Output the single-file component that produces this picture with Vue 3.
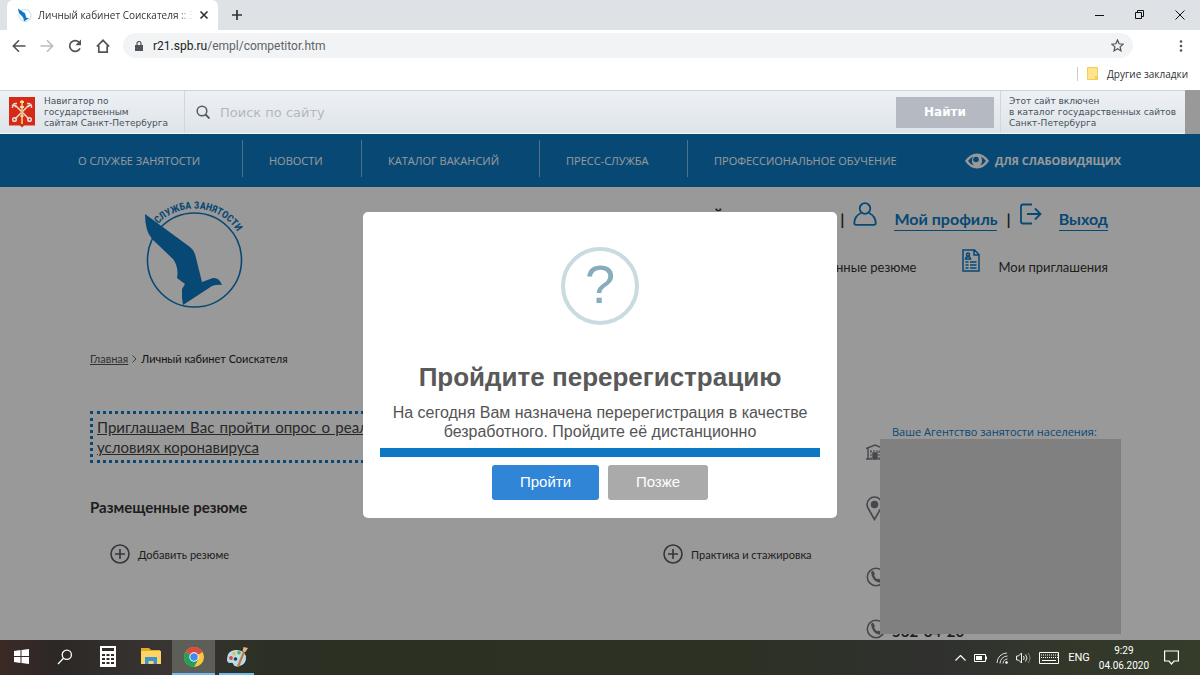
<script setup>
const menu = ['О службе занятости', 'Новости', 'Каталог вакансий', 'Пресс-служба', 'Профессиональное обучение']
const keys = [0, 1, 2, 3, 4, 5, 6, 7, 8]
</script>

<template>
  <div class="screen">
    <header class="tabs">
      <div class="tab">
        <svg class="fav" viewBox="0 0 16 16"><circle cx="8.500" cy="8" r="6.500" fill="#fff" stroke="#b9dcf2" /><path d="M1 0.500 L8.500 5.500 L10 10.500 L13 11 L7.500 14 L6.500 10 L2 5Z" fill="#0d79c2" /></svg>
        <span class="tab-name">Личный кабинет Соискателя :: З</span>
        <button class="plain" aria-label="Закрыть вкладку"><svg width="10" height="10" viewBox="0 0 10 10"><path d="M1.500 1.500l7 7M8.500 1.500l-7 7" stroke="#333" stroke-width="1.600" /></svg></button>
      </div>
      <button class="plain plus" aria-label="Новая вкладка"><svg width="12" height="12" viewBox="0 0 12 12"><path d="M6 1v10M1 6h10" stroke="#333" stroke-width="1.700" /></svg></button>
      <div class="win">
        <button class="plain" aria-label="Свернуть"><svg width="10" height="10" viewBox="0 0 10 10"><path d="M0 5.500h9" stroke="#111" /></svg></button>
        <button class="plain" aria-label="Окно"><svg width="10" height="10" viewBox="0 0 10 10" fill="none" stroke="#111"><path d="M.5 2.500h6v6h-6zM2.500 2.500v-2h6v6h-2" /></svg></button>
        <button class="plain" aria-label="Закрыть"><svg width="10" height="10" viewBox="0 0 10 10"><path d="M.5 .5l9 9M9.500 .5l-9 9" stroke="#111" /></svg></button>
      </div>
    </header>

    <div class="toolbar">
      <button class="plain" aria-label="Назад"><svg width="14" height="14" viewBox="0 0 14 14" fill="none" stroke="#505357" stroke-width="1.600"><path d="M13.500 7H1.500M7 1.300L1.300 7 7 12.700" /></svg></button>
      <button class="plain" aria-label="Вперёд"><svg width="14" height="14" viewBox="0 0 14 14" fill="none" stroke="#babcbe" stroke-width="1.600"><path d="M.5 7h12M7 1.300L12.700 7 7 12.700" /></svg></button>
      <button class="plain" aria-label="Обновить"><svg width="14" height="14" viewBox="0 0 14 14"><path d="M12 9.300A5.400 5.400 0 1 1 11 3.200" fill="none" stroke="#505357" stroke-width="1.700" /><path d="M13 .6v5.600H7.400z" fill="#505357" /></svg></button>
      <button class="plain" aria-label="Домой"><svg width="14" height="14" viewBox="0 0 14 14" fill="none" stroke="#505357" stroke-width="1.700"><path d="M.8 7.500L7 1.300l6.200 6.200M2.800 6.500v6.600h8.400V6.500" /></svg></button>
      <div class="omni">
        <svg width="8" height="10" viewBox="0 0 8 10"><path d="M0 4h8v6H0z" fill="#505357" /><path d="M2 4V2.500a2 2 0 0 1 4 0V4" fill="none" stroke="#505357" stroke-width="1.200" /></svg>
        <span><b>r21.spb.ru</b>/empl/competitor.htm</span>
        <svg class="star" width="13" height="13" viewBox="0 0 13 13"><path d="M6.500 1l1.600 3.800 4.100.4-3.100 2.700.9 4-3.500-2.100L3 11.900l.9-4L.8 5.200l4.100-.4z" fill="none" stroke="#505357" stroke-width="1.200" /></svg>
      </div>
      <button class="plain dots" aria-label="Меню"><svg width="4" height="14" viewBox="0 0 4 14" fill="#505357"><circle cx="2" cy="2.500" r="1.300" /><circle cx="2" cy="7" r="1.300" /><circle cx="2" cy="11.500" r="1.300" /></svg></button>
    </div>
    <div class="marks">
      <svg width="11" height="13" viewBox="0 0 11 13"><path d="M.5 .5h10v12H.5z" fill="#ffe48d" stroke="#f2cd57" /><path d="M8 9h2.500v3.500H8z" fill="#f2cd57" /></svg>
      <span>Другие закладки</span>
    </div>

    <div class="page">
      <div class="gov">
        <a class="gov-left" href="#">
          <svg width="26" height="31" viewBox="0 0 26 31"><path d="M0 0h26v28.500H15L13 30.500l-2-2H0z" fill="#d62a18" /><g fill="none" stroke="#e6dcd4" stroke-width="1.500"><path d="M6 22L20 8M20 22L6 8" /><path d="M3.500 11Q3 6 8 6.500M22.500 11Q23 6 18 6.500M4 7l3 3M22 7l-3 3" /><circle cx="5.500" cy="22.500" r="1.800" /><circle cx="20.500" cy="22.500" r="1.800" /></g><path d="M13 3v24" stroke="#e9c46c" stroke-width="1.800" /><path d="M11 5h4M11 10h4M11.500 19h3" stroke="#f2dc9a" stroke-width="2" /></svg>
          <span>Навигатор по<br>государственным<br>сайтам Санкт-Петербурга</span>
        </a>
        <form class="search" @submit.prevent>
          <label for="q"><svg width="14" height="14" viewBox="0 0 14 14" fill="none" stroke="#565b62"><circle cx="6" cy="6" r="4.800" stroke-width="1.500" /><path d="M9.500 9.500l4 4" stroke-width="1.900" /></svg></label>
          <input id="q" type="text" placeholder="Поиск по сайту" aria-label="Поиск по сайту">
          <button>Найти</button>
        </form>
        <a class="gov-right" href="#">Этот сайт включен<br>в каталог государственных сайтов<br>Санкт-Петербурга</a>
      </div>

      <nav class="nav">
        <a v-for="m in menu" :key="m" href="#">{{ m }}</a>
        <a class="eye" href="#"><svg width="24" height="16" viewBox="0 0 24 16"><path d="M0 8Q5 .5 12 .5T24 8Q19 15.500 12 15.500T0 8z" fill="#fff" /><path d="M3 8Q5 5 8 3.500Q5.500 9 9 12.500Q5 11 3 8zM21 8Q19 5 16 3.500Q18.500 9 15 12.500Q19 11 21 8z" fill="#0d79c2" /><circle cx="11" cy="6.500" r="2.800" fill="#0d79c2" /></svg>Для слабовидящих</a>
      </nav>

      <main>
        <div class="head">
          <svg class="logo" viewBox="0 0 102 112" width="102" height="112">
            <defs><path id="arc" d="M15 26A51 51 0 0 1 102 54" /></defs>
            <circle cx="51.500" cy="62" r="47" fill="none" stroke="#0d79c2" stroke-width="1.600" />
            <path d="M2 16L47 49Q51 52 52 56L59 84 70 80Q76 79 79 87 71 86 66 90L40 107 39 100V91L42 86 34 80Q36 69 30 61L9 41Q2 33 2 16z" fill="#0d79c2" />
            <text><textPath href="#arc">СЛУЖБА ЗАНЯТОСТИ</textPath></text>
          </svg>
          <div class="account">
            <div class="who">
              <span class="name">Й</span><span>|</span>
              <svg width="24" height="24" viewBox="0 0 24 24" fill="none" stroke="#0d79c2" stroke-width="1.800"><circle cx="12" cy="6.500" r="5.300" /><path d="M8 11Q1.500 14 1.300 21q0 1.800 1.700 1.800h18q1.700 0 1.700-1.800Q22.500 14 16 11" /></svg>
              <a href="#">Мой профиль</a><span class="bar">|</span>
              <svg width="22" height="24" viewBox="0 0 22 24" fill="none" stroke="#0d79c2" stroke-width="1.800"><path d="M12 2.500H3Q1 2.500 1 4.500v15q0 2 2 2h9M7 12h13M15 6.500l5.500 5.500-5.500 5.500" /></svg>
              <a href="#">Выход</a>
            </div>
            <div class="links">
              <a href="#">Избранные резюме</a>
              <svg width="18" height="24" viewBox="0 0 18 24" fill="none" stroke="#0d79c2" stroke-width="1.500"><path d="M1 1h11.500L17 5.500V22H1zM12 1v5h5" /><circle cx="6" cy="5.500" r="1.500" /><path d="M3.500 10Q4 7.500 6 7.500T8.500 10zM3.500 13h3M8 13h6.500M3.500 16h3M8 16h6.500M3.500 19h3M8 19h6.500" /></svg>
              <a href="#">Мои приглашения</a>
            </div>
          </div>
        </div>

        <div class="crumbs"><a href="#">Главная</a><svg width="5" height="8" viewBox="0 0 5 8"><path d="M.5 .5L4 4 .5 7.500" fill="none" stroke="#666" /></svg><span>Личный кабинет Соискателя</span></div>

        <div class="cols">
          <section>
            <a class="survey" href="#">Приглашаем Вас пройти опрос о реализации прав граждан на труд и полную занятость населения в условиях коронавируса</a>
            <h2>Размещенные резюме</h2>
            <div class="actions">
              <a v-for="t in ['Добавить резюме', 'Практика и стажировка']" :key="t" href="#">
                <svg width="20" height="20" viewBox="0 0 20 20" fill="none" stroke="#555a60" stroke-width="1.600"><circle cx="10" cy="10" r="9" /><path d="M10 5v10M5 10h10" /></svg>{{ t }}
              </a>
            </div>
          </section>
          <aside>
            <h3>Ваше Агентство занятости населения:</h3>
            <svg class="house" width="18" height="16" viewBox="0 0 18 16" fill="none" stroke="#74777c" stroke-width="1.400"><path d="M0 4.500L9 1l9 3.500M2 4v11M16 4v11M0 15h6M12 15h6" /><path d="M4 7h10M5 7v7M13 7v7" stroke-width="1" stroke-dasharray="2 1" /><path d="M7 9h4v6H7z" fill="#74777c" /></svg>
            <svg class="pin" width="17" height="25" viewBox="0 0 17 25" fill="none" stroke="#74777c" stroke-width="1.600"><path d="M8.500 23.500L2.500 13Q1 10.500 1 8.500a7.500 7.500 0 0 1 15 0q0 2-1.500 4.500z" /><circle cx="8.500" cy="8.500" r="3" fill="#74777c" /></svg>
            <div v-for="n in 2" :key="n" class="phone">
              <svg width="20" height="20" viewBox="0 0 20 20"><circle cx="10" cy="10" r="8.700" fill="none" stroke="#74777c" stroke-width="1.500" /><path d="M5 5l2-1.500 2 3.500-1 1.200q1 2.800 3.500 4l1.300-.8 3 2-1.500 2.300Q6 15 5 5z" fill="#74777c" /></svg>
              <b v-if="n === 2">562-64-20</b>
            </div>
          </aside>
        </div>
      </main>

      <div class="shade">
        <div class="modal" role="dialog" aria-labelledby="mt">
          <div class="q">?</div>
          <h1 id="mt">Пройдите перерегистрацию</h1>
          <p>На сегодня Вам назначена перерегистрация в качестве безработного. Пройдите её дистанционно</p>
          <div class="line"></div>
          <div class="btns"><button>Пройти</button><button class="later">Позже</button></div>
        </div>
      </div>
      <div class="cover"></div>
    </div>

    <footer class="task">
      <button class="plain" aria-label="Пуск"><svg width="15" height="15" viewBox="0 0 15 15" fill="#fff"><path d="M0 2l6.500-1v6H0zM7.500 1L15 0v7H7.500zM0 8h6.500v6L0 13zM7.500 8H15v7l-7.500-1z" /></svg></button>
      <button class="plain" aria-label="Поиск"><svg width="16" height="16" viewBox="0 0 16 16" fill="none" stroke="#fff" stroke-width="1.300"><circle cx="9.800" cy="5.800" r="4.600" /><path d="M6.500 9.200L1 15" /></svg></button>
      <button class="plain" aria-label="Калькулятор"><svg width="16" height="21" viewBox="0 0 16 21"><path d="M0 0h16v21H0z" fill="#fff" /><path d="M2 2h12v3H2zM2 8h3v2H2zM6.500 8h3v2h-3zM11 8h3v2h-3zM2 12h3v2H2zM6.500 12h3v2h-3zM11 12h3v2h-3zM2 16h3v2H2zM6.500 16h3v2h-3zM11 16h3v2h-3z" fill="#302c2a" /></svg></button>
      <button class="plain" aria-label="Проводник"><svg width="20" height="17" viewBox="0 0 20 17"><path d="M0 0h8l2 2h9v13H0z" fill="#e8a825" /><path d="M0 3h20v13H0z" fill="#fbd665" /><path d="M4 16V9h12v7h-3.500v-3h-5v3z" fill="#3f93d2" /></svg></button>
      <button class="plain active" aria-label="Chrome"><svg width="20" height="20" viewBox="0 0 20 20"><circle cx="10" cy="10" r="10" fill="#fbc93c" /><path d="M10 10L1.340 5A10 10 0 0 1 18.660 5z" fill="#dd4b3d" /><path d="M10 10L1.340 5A10 10 0 0 0 10 20l4.300-7.500z" fill="#1fa05b" /><circle cx="10" cy="10" r="4.700" fill="#fff" /><circle cx="10" cy="10" r="3.800" fill="#4587f3" /></svg></button>
      <button class="plain open" aria-label="Paint"><svg width="22" height="22" viewBox="0 0 22 22"><path d="M1 13Q1 5 9 4t11 6q1 9-8 10.500-4 .5-4.500-2t-3.500-1.500Q1 17 1 13z" fill="#b7dcf0" /><circle cx="5" cy="12" r="1.900" fill="#d8473b" /><circle cx="8" cy="7.800" r="1.800" fill="#f0b93c" /><circle cx="13" cy="6.800" r="1.800" fill="#58b04f" /><circle cx="9.500" cy="13" r="1.800" fill="#333a33" /><path d="M12 20.500L18 6" stroke="#c67a35" stroke-width="2.200" /><path d="M16.500 5.500L17.500 1 22 2 19.500 6z" fill="#e2b587" /></svg></button>
      <div class="tray">
        <svg width="11" height="6" viewBox="0 0 11 6" fill="none" stroke="#fff" stroke-width="1.200"><path d="M.5 5.500l5-5 5 5" /></svg>
        <svg width="14" height="8" viewBox="0 0 14 8"><path d="M.5 .5h11v7H.5zM12.500 2.500v3" fill="none" stroke="#fff" /><path d="M2 2h6v4H2z" fill="#fff" /></svg>
        <svg width="12" height="12" viewBox="0 0 12 12" fill="none" stroke="#ddd"><path d="M1 11A10 10 0 0 1 11 1M4 11.500A7.500 7.500 0 0 1 11.500 4M7 11.500A4.500 4.500 0 0 1 11.500 7" /><circle cx="10.500" cy="10.500" r="1" fill="#fff" /></svg>
        <svg width="15" height="12" viewBox="0 0 15 12" fill="none" stroke="#eee"><path d="M.5 4h2l3-3v10l-3-3h-2zM7.500 4q1.500 2 0 4M9.500 2.500q3 3.500 0 7" /><path d="M12 1q4 5 0 10" stroke="#888" /></svg>
        <svg width="20" height="12" viewBox="0 0 20 12"><path d="M.5 .5h19v11H.5z" fill="none" stroke="#fff" /><path v-for="k in keys" :key="k" :d="`M${2 + k * 2} 3h1M${2 + k * 2} 5.500h1`" stroke="#fff" /><path d="M3 8.500h14" stroke="#fff" /></svg>
        <span class="lang">ENG</span>
        <span class="time">9:29<br>04.06.2020</span>
        <svg width="15" height="15" viewBox="0 0 15 15" fill="none" stroke="#fff" stroke-width="1.200"><path d="M.6 1h13.800v10H10l-2.500 3L5 11H.6z" /></svg>
      </div>
    </footer>
  </div>
</template>

<style>
body { margin: 0; }
</style>

<style scoped>
* { box-sizing: border-box; }
.screen { min-height: 100vh; display: flex; flex-direction: column; font-family: Roboto, "Open Sans", sans-serif; overflow: hidden; background: #fff; }
a { color: inherit; text-decoration: none; }
svg { flex: none; display: block; }
.plain { border: 0; background: none; padding: 0; display: flex; align-items: center; justify-content: center; flex: none; }
.tabs { height: 30px; background: #dee1e6; display: flex; align-items: center; padding-left: 7px; }
.tab { width: 211px; height: 30px; background: #fff; border-radius: 6px 6px 0 0; display: flex; align-items: center; padding: 0 9px 0 10px; gap: 6px; }
.fav { width: 15px; height: 15px; }
.tab-name { flex: 1; font-family: "Open Sans", sans-serif; font-size: 10px; color: #333; white-space: nowrap; overflow: hidden; -webkit-mask-image: linear-gradient(to right, #000 90%, transparent); mask-image: linear-gradient(to right, #000 90%, transparent); }
.plus { margin-left: 13px; }
.win { margin-left: auto; display: flex; height: 26px; }
.win .plain { width: 40px; }
.toolbar { height: 32px; display: flex; align-items: center; padding: 0 17px 1px 12px; gap: 14px; }
.omni { flex: 1; height: 25px; margin-right: 32px; margin-left: -1px; background: #f1f3f4; border-radius: 13px; display: flex; align-items: center; gap: 10px; padding: 0 9px 0 12px; font-size: 12px; color: #5f6368; }
.omni b { font-weight: 400; color: #222; }
.star { margin-left: auto; }
.marks { height: 28px; display: flex; align-items: center; justify-content: flex-end; gap: 9px; padding: 0 12px 5px 0; font-family: "Open Sans", sans-serif; font-size: 10px; color: #2c3034; }
.marks::before { content: ""; width: 1px; height: 14px; background: #ccc; }
.page { flex: 1; position: relative; font-family: Lato, Roboto, sans-serif; color: #333; }
.gov { position: relative; z-index: 3; height: 44px; margin-right: 15px; display: flex; background: linear-gradient(#edf1f5, #dfe4e9); border-top: 1px solid #cdd3d9; border-bottom: 1px solid #f4f6f8; font: 9px/11px "DejaVu Sans", sans-serif; color: #45525c; }
.gov-left { width: 185px; display: flex; align-items: center; gap: 9px; padding-left: 9px; border-right: 1px solid #d0d6dc; white-space: nowrap; }
.gov-right { width: 185px; display: flex; align-items: center; padding-left: 8px; border-left: 1px solid #d0d6dc; white-space: nowrap; }
.search { flex: 1; display: flex; align-items: center; padding: 0 6px 0 11px; gap: 10px; }
.search input { flex: 1; min-width: 0; border: 0; background: none; padding: 0; font: 13px "DejaVu Sans", sans-serif; }
.search input::placeholder { color: #b4b8bd; opacity: 1; }
.search button { width: 98px; height: 31px; border: 0; background: #b4b9c2; color: #fff; font: bold 12px "DejaVu Sans", sans-serif; }
.nav { height: 53px; background: #0d79c2; color: #fff; padding-left: 52px; display: grid; grid-template-columns: 191fr 119fr 178fr 148fr 252fr 260fr; align-items: center; font-family: "Open Sans", sans-serif; font-size: 11px; text-transform: uppercase; }
.nav a { height: 37px; margin-bottom: 5px; display: flex; align-items: center; padding: 5px 0 0 26px; white-space: nowrap; border-right: 1px solid rgba(255, 255, 255, 0.5); }
.nav a:nth-child(n + 5) { border: 0; }
.nav .eye { font-weight: 700; gap: 6px; padding-left: 25px; }
main { padding: 11px 92px 0 90px; }
.head { display: flex; justify-content: space-between; height: 154px; padding-left: 53px; }
.logo { overflow: visible; }
.logo text { font: bold 10px "Liberation Sans Narrow", "Roboto Condensed", Roboto, sans-serif; fill: #0d79c2; }
.account { display: flex; flex-direction: column; align-items: flex-end; }
.who { display: flex; align-items: flex-start; font-weight: 700; font-size: 16px; line-height: 22px; padding-top: 4px; }
.who span, .who a { margin-top: 6px; }
.who svg { margin: 0 17px 0 9px; }
.who .name { width: 129px; font-size: 18px; }
.who .bar { margin-left: 9px; }
.who a { color: #0d79c2; border-bottom: 1px solid; }
.links { display: flex; align-items: flex-start; font-size: 13px; line-height: 20px; margin-top: 18px; }
.links a { margin-top: 8px; }
.links svg { margin: 0 18px 0 46px; }
.crumbs { display: flex; align-items: center; gap: 4px; font-size: 11px; line-height: 14px; color: #222; }
.crumbs a { text-decoration: underline; color: #555; }
.cols { display: grid; grid-template-columns: minmax(0, 730fr) 242fr; column-gap: 46px; margin-top: 45px; }
.survey { display: block; border: 3px dotted #0d79c2; padding: 3px 4px; font-size: 15px; line-height: 20px; text-align: justify; text-decoration: underline; color: #444; }
h2 { margin: 33px 0 0; font-size: 15px; line-height: 22px; }
.actions { display: grid; grid-template-columns: 553fr 157fr; margin: 26px 0 0 20px; font-size: 11px; white-space: nowrap; }
.actions a { display: flex; align-items: center; gap: 8px; }
aside { padding-top: 13px; }
h3 { margin: 0 0 4px 26px; font-weight: 400; font-family: "Open Sans", sans-serif; font-size: 11px; line-height: 16px; color: #0d79c2; white-space: nowrap; }
.pin { margin-top: 36px; }
.phone { display: flex; align-items: center; gap: 6px; height: 20px; margin-top: 46px; font-size: 15px; }
.phone b { padding-top: 3px; }
.phone + .phone { margin-top: 32px; }
.shade { position: absolute; inset: 0; z-index: 2; background: rgba(0, 0, 0, 0.4); display: flex; align-items: center; justify-content: center; }
.modal { width: 474px; background: #fff; border-radius: 5px; padding: 35px 17px 18px; text-align: center; font-family: "Liberation Sans", Arial, sans-serif; color: #545454; }
.q { width: 78px; height: 78px; margin: 0 auto; border: 4px solid #c9dae1; border-radius: 50%; color: #87adbd; font-size: 54px; line-height: 67px; }
h1 { margin: 36px 0 10px; font-size: 26px; line-height: 32px; color: #595959; }
.modal p { margin: 0 auto 7px; width: 420px; font-size: 16px; line-height: 19px; }
.line { height: 9px; background: #0d79c2; }
.btns { display: flex; justify-content: center; gap: 9px; margin-top: 8px; }
.btns button { height: 35px; width: 107px; padding-bottom: 3px; border: 0; border-radius: 3px; background: #3085d6; color: #fff; font: 15px "Liberation Sans", Arial, sans-serif; }
.btns .later { width: 100px; background: #aaa; }
.cover { position: absolute; z-index: 5; right: 79px; top: 349px; width: 241px; height: 195px; background: #808080; }
.task { height: 35px; display: flex; background: linear-gradient(90deg, #3b2a26, #2b2826 5%, #3a3532 14%, #2c3024 22%, #2c3123 60%, #30312f 78%, #32372a 88%, #353c2a); }
.task .plain { width: 43px; border-bottom: 2px solid transparent; }
.task .active { background: #5d5e57; border-color: #76b9ed; }
.task .open { width: 35px; margin-left: 4px; border-color: #76b9ed; }
.tray { margin-left: auto; display: flex; align-items: center; gap: 8px; padding-right: 21px; color: #fff; font-size: 11px; line-height: 15px; text-align: center; }
.lang { margin-left: 1px; }
.time { font-size: 10px; margin: 0 7px 0 1px; }
</style>
